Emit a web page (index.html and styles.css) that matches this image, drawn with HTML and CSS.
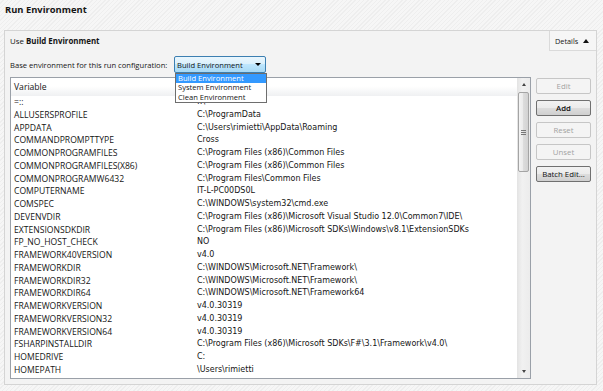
FILE: index.html
```html
<!DOCTYPE html>
<html lang="en">
<head>
    <meta charset="UTF-8">
    <meta name="viewport" content="width=device-width, initial-scale=1.0">
    <title>Run Environment</title>
    <link rel="stylesheet" href="styles.css">
</head>
<body>
    <div class="title">Run Environment</div>

    <div class="panel">
        <div class="panel-head">
            <div class="use">Use <b>Build Environment</b></div>
            <div class="details">Details <span class="tri-up"></span></div>
        </div>

        <div class="panel-body">
            <div class="base-row">
                <label>Base environment for this run configuration:</label>
                <div class="combo">
                    <span>Build Environment</span>
                    <span class="tri-down"></span>
                    <ul class="dropdown">
                        <li class="selected">Build Environment</li>
                        <li>System Environment</li>
                        <li>Clean Environment</li>
                    </ul>
                </div>
            </div>

            <div class="env-area">
                <div class="list">
                    <div class="list-main">
                        <div class="row list-header"><span>Variable</span><span></span></div>
                        <div class="row"><span>=::</span><span>::\</span></div>
                        <div class="row"><span>ALLUSERSPROFILE</span><span>C:\ProgramData</span></div>
                        <div class="row"><span>APPDATA</span><span>C:\Users\rimietti\AppData\Roaming</span></div>
                        <div class="row"><span>COMMANDPROMPTTYPE</span><span>Cross</span></div>
                        <div class="row"><span>COMMONPROGRAMFILES</span><span>C:\Program Files (x86)\Common Files</span></div>
                        <div class="row"><span>COMMONPROGRAMFILES(X86)</span><span>C:\Program Files (x86)\Common Files</span></div>
                        <div class="row"><span>COMMONPROGRAMW6432</span><span>C:\Program Files\Common Files</span></div>
                        <div class="row"><span>COMPUTERNAME</span><span>IT-L-PC00DS0L</span></div>
                        <div class="row"><span>COMSPEC</span><span>C:\WINDOWS\system32\cmd.exe</span></div>
                        <div class="row"><span>DEVENVDIR</span><span>C:\Program Files (x86)\Microsoft Visual Studio 12.0\Common7\IDE\</span></div>
                        <div class="row"><span>EXTENSIONSDKDIR</span><span>C:\Program Files (x86)\Microsoft SDKs\Windows\v8.1\ExtensionSDKs</span></div>
                        <div class="row"><span>FP_NO_HOST_CHECK</span><span>NO</span></div>
                        <div class="row"><span>FRAMEWORK40VERSION</span><span>v4.0</span></div>
                        <div class="row"><span>FRAMEWORKDIR</span><span>C:\WINDOWS\Microsoft.NET\Framework\</span></div>
                        <div class="row"><span>FRAMEWORKDIR32</span><span>C:\WINDOWS\Microsoft.NET\Framework\</span></div>
                        <div class="row"><span>FRAMEWORKDIR64</span><span>C:\WINDOWS\Microsoft.NET\Framework64</span></div>
                        <div class="row"><span>FRAMEWORKVERSION</span><span>v4.0.30319</span></div>
                        <div class="row"><span>FRAMEWORKVERSION32</span><span>v4.0.30319</span></div>
                        <div class="row"><span>FRAMEWORKVERSION64</span><span>v4.0.30319</span></div>
                        <div class="row"><span>FSHARPINSTALLDIR</span><span>C:\Program Files (x86)\Microsoft SDKs\F#\3.1\Framework\v4.0\</span></div>
                        <div class="row"><span>HOMEDRIVE</span><span>C:</span></div>
                        <div class="row"><span>HOMEPATH</span><span>\Users\rimietti</span></div>
                    </div>
                    <div class="scrollbar">
                        <div class="sb-arrow"><span class="sb-up"></span></div>
                        <div class="sb-thumb"><span class="grip"></span></div>
                        <div class="sb-track"></div>
                        <div class="sb-arrow"><span class="sb-down"></span></div>
                    </div>
                </div>

                <div class="buttons">
                    <button disabled>Edit</button>
                    <button class="default">Add</button>
                    <button disabled>Reset</button>
                    <button disabled>Unset</button>
                    <button>Batch Edit...</button>
                </div>
            </div>
        </div>
    </div>
</body>
</html>
```

FILE: styles.css
```css
body { margin: 0; font-family: "Open Sans", "Liberation Sans", Arial, sans-serif; font-size: 7.6px; color: #151515; background: repeating-linear-gradient(135deg, #f6f6f6 0 2px, #eeeeee 2px 3px); }
.title { height: 30px; box-sizing: border-box; padding: 3px 0 0 5px; font-size: 9.4px; font-weight: bold; line-height: 14px; }

.panel { height: 355px; margin: 0 6px 0 4px; box-sizing: border-box; border: 1px solid #d4d4d4; background: #f3f3f3; }
.panel-head { display: flex; align-items: center; height: 20px; }
.use { flex: 1; padding-left: 5px; font-size: 7.9px; }
.details { display: flex; align-items: center; gap: 5px; width: 47px; height: 20px; box-sizing: border-box; padding-left: 5px; border-left: 1px solid #dadada; border-bottom: 1px solid #dadada; background: #f6f6f6; font-size: 7.3px; }
.tri-up { width: 0; height: 0; border: 3px solid transparent; border-top: 0; border-bottom: 4px solid #111; }

.panel-body { padding: 5px; }
.base-row { display: flex; align-items: center; height: 17px; }
.base-row label { flex: 0 0 164px; }
.combo { position: relative; display: flex; align-items: center; justify-content: space-between; width: 92px; height: 17px; box-sizing: border-box; padding: 0 4px 0 2px; border: 1px solid #3c7fb1; border-radius: 2px; background: linear-gradient(#eaf6fd, #d9f0fc 50%, #bee6fd 50%, #a7d9f5); }
.tri-down { width: 0; height: 0; border: 3px solid transparent; border-bottom: 0; border-top: 3px solid #000; }
.dropdown { position: absolute; top: 16px; left: 0; z-index: 2; width: 92px; box-sizing: border-box; margin: 0; padding: 0; list-style: none; border: 1px solid #6e6e6e; background: #fff; }
.dropdown li { height: 9.4px; line-height: 9.4px; padding-left: 2px; white-space: nowrap; }
.dropdown .selected { background: #3399ff; color: #fff; }

.env-area { display: flex; gap: 5px; height: 302px; margin-top: 4px; }
.list { display: flex; flex: 0 0 521px; box-sizing: border-box; border: 1px solid #9aa0a8; background: #fff; }
.list-main { flex: 1; overflow: hidden; font-size: 8.6px; }
.row { display: grid; grid-template-columns: 183px 1fr; height: 12.75px; padding-left: 3px; line-height: 12.75px; white-space: nowrap; }
.row span + span { font-family: "DejaVu Sans", sans-serif; font-size: 8px; }
.list-header { height: 18px; line-height: 18px; background: linear-gradient(#fff, #fff 45%, #eff0f2); }

.scrollbar { display: flex; flex-direction: column; width: 13px; background: linear-gradient(90deg, #e3e3e3, #f1f1f1 40%, #ececec); }
.sb-arrow { display: flex; align-items: center; justify-content: center; height: 13px; }
.sb-up { border: 2.5px solid transparent; border-top: 0; border-bottom: 3px solid #444; }
.sb-down { border: 2.5px solid transparent; border-bottom: 0; border-top: 3px solid #444; }
.sb-thumb { display: flex; align-items: center; justify-content: center; height: 80px; margin: 1px 1px 0; box-sizing: border-box; border: 1px solid #a4a4a4; border-radius: 2px; background: linear-gradient(90deg, #f4f4f4, #e9e9e9 50%, #dcdcdc 50%, #d2d2d2); }
.grip { width: 5px; height: 5px; background: repeating-linear-gradient(#777 0 1px, transparent 1px 2px); }
.sb-track { flex: 1; }

.buttons { display: flex; flex-direction: column; gap: 6px; flex: 1; padding-top: 1px; }
button { height: 16px; padding: 0; font: inherit; font-size: 7.8px; color: #111; border: 1px solid #707070; border-radius: 2px; background: linear-gradient(#f2f2f2, #ebebeb 50%, #dddddd 50%, #cfcfcf); }
button.default { font-weight: 600; }
button:disabled { color: #a2a2a2; border-color: #c6c6c6; background: #f4f4f4; }
```
